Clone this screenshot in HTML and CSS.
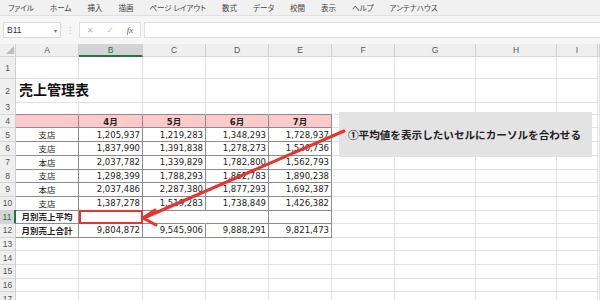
FILE: index.html
```html
<!DOCTYPE html>
<html lang="ja">
<head>
    <meta charset="UTF-8">
    <title>売上管理表</title>
    <link rel="stylesheet" href="styles.css">
</head>
<body>
    <div class="menubar">
        <span>ファイル</span><span>ホーム</span><span>挿入</span><span>描画</span><span>ページ レイアウト</span><span>数式</span><span>データ</span><span>校閲</span><span>表示</span><span>ヘルプ</span><span>アンテナハウス</span>
    </div>
    <div class="formulabar">
        <div class="namebox"><span>B11</span><span class="drop">▾</span></div>
        <div class="grip">⋮</div>
        <div class="fxbox"><span>✕</span><span>✓</span><span class="fx">fx</span></div>
        <div class="input"></div>
    </div>
    <div class="sheet">
        <div class="row head"><div class="corner"><span class="tri"></span></div><div>A</div><div class="sel">B</div><div>C</div><div>D</div><div>E</div><div>F</div><div>G</div><div>H</div><div>I</div><div></div></div>
        <div class="row r1"><div class="rh">1</div><div></div><div></div><div></div><div></div><div></div><div></div><div></div><div></div><div></div><div></div></div>
        <div class="row r2"><div class="rh">2</div><div class="title">売上管理表</div><div></div><div></div><div></div><div></div><div></div><div></div><div></div><div></div><div></div></div>
        <div class="row"><div class="rh">3</div><div class="tt"></div><div class="tt"></div><div class="tt"></div><div class="tt"></div><div class="tt"></div><div></div><div></div><div></div><div></div><div></div></div>
        <div class="row"><div class="rh">4</div><div class="t h"></div><div class="t h">4月</div><div class="t h">5月</div><div class="t h">6月</div><div class="t h">7月</div><div></div><div></div><div></div><div></div><div></div></div>
        <div class="row"><div class="rh">5</div><div class="t c">支店</div><div class="t n">1,205,937</div><div class="t n">1,219,283</div><div class="t n">1,348,293</div><div class="t n">1,728,937</div><div></div><div></div><div></div><div></div><div></div></div>
        <div class="row"><div class="rh">6</div><div class="t c">支店</div><div class="t n">1,837,990</div><div class="t n">1,391,838</div><div class="t n">1,278,273</div><div class="t n">1,520,736</div><div></div><div></div><div></div><div></div><div></div></div>
        <div class="row"><div class="rh">7</div><div class="t c">本店</div><div class="t n">2,037,782</div><div class="t n">1,339,829</div><div class="t n">1,782,800</div><div class="t n">1,562,793</div><div></div><div></div><div></div><div></div><div></div></div>
        <div class="row"><div class="rh">8</div><div class="t c">支店</div><div class="t n">1,298,399</div><div class="t n">1,788,293</div><div class="t n">1,862,783</div><div class="t n">1,890,238</div><div></div><div></div><div></div><div></div><div></div></div>
        <div class="row"><div class="rh">9</div><div class="t c">本店</div><div class="t n">2,037,486</div><div class="t n">2,287,380</div><div class="t n">1,877,293</div><div class="t n">1,692,387</div><div></div><div></div><div></div><div></div><div></div></div>
        <div class="row"><div class="rh">10</div><div class="t c">支店</div><div class="t n">1,387,278</div><div class="t n">1,519,283</div><div class="t n">1,738,849</div><div class="t n">1,426,382</div><div></div><div></div><div></div><div></div><div></div></div>
        <div class="row"><div class="rh cur">11</div><div class="t c b">月別売上平均</div><div class="t active"></div><div class="t open"></div><div class="t"></div><div class="t"></div><div></div><div></div><div></div><div></div><div></div></div>
        <div class="row"><div class="rh">12</div><div class="t c b">月別売上合計</div><div class="t n">9,804,872</div><div class="t n">9,545,906</div><div class="t n">9,888,291</div><div class="t n">9,821,473</div><div></div><div></div><div></div><div></div><div></div></div>
        <div class="row"><div class="rh">13</div><div></div><div></div><div></div><div></div><div></div><div></div><div></div><div></div><div></div><div></div></div>
        <div class="row"><div class="rh">14</div><div></div><div></div><div></div><div></div><div></div><div></div><div></div><div></div><div></div><div></div></div>
        <div class="row"><div class="rh">15</div><div></div><div></div><div></div><div></div><div></div><div></div><div></div><div></div><div></div><div></div></div>
        <div class="row"><div class="rh">16</div><div></div><div></div><div></div><div></div><div></div><div></div><div></div><div></div><div></div><div></div></div>
        <div class="row"><div class="rh">17</div><div></div><div></div><div></div><div></div><div></div><div></div><div></div><div></div><div></div><div></div></div>

        <!-- annotation -->
        <div class="callout">①平均値を表示したいセルにカーソルを合わせる</div>
        <svg class="arrow" width="600" height="256" viewBox="0 0 600 256">
            <line x1="344" y1="87" x2="145" y2="173.5" stroke="#e8332f" stroke-width="3" stroke-linecap="round"/>
            <polyline points="155,166 143,174 156,181" fill="none" stroke="#e8332f" stroke-width="3" stroke-linecap="round" stroke-linejoin="round"/>
        </svg>
    </div>
</body>
</html>
```

FILE: styles.css
```css
body {
    margin: 0;
    width: 600px;
    height: 300px;
    overflow: hidden;
    background: #fff;
    font-family: "DejaVu Sans", "Noto Sans CJK JP", sans-serif;
}

/* ribbon tabs */
.menubar {
    height: 15px;
    display: flex;
    align-items: center;
    gap: 16px;
    padding-left: 8px;
    background: #f1f1f1;
    border-bottom: 1px solid #e0e0e0;
    font-family: "Noto Sans CJK JP", sans-serif;
    font-size: 7.5px;
    color: #444;
    font-feature-settings: "palt";
}

/* name box + formula input */
.formulabar {
    height: 28px;
    display: flex;
    align-items: center;
    padding-left: 3px;
    box-sizing: border-box;
    background: #f6f6f6;
}

.namebox {
    width: 58px;
    height: 16px;
    display: flex;
    align-items: center;
    justify-content: space-between;
    padding: 0 3px;
    box-sizing: border-box;
    background: #fff;
    border: 1px solid #dadada;
    font-family: "Liberation Sans", sans-serif;
    font-size: 8.5px;
    color: #333;
}

.namebox .drop {
    font-size: 6px;
    color: #777;
}

.grip {
    width: 18px;
    text-align: center;
    font-size: 8px;
    color: #bbb;
}

.fxbox {
    width: 62px;
    height: 16px;
    display: flex;
    align-items: center;
    justify-content: space-around;
    box-sizing: border-box;
    background: #fff;
    border: 1px solid #e0e0e0;
    font-size: 8px;
    color: #b5b5b5;
}

.fxbox .fx {
    font-family: "Liberation Serif", serif;
    font-style: italic;
    font-size: 9px;
    color: #555;
}

.input {
    flex: 1;
    height: 16px;
    margin-left: 3px;
    box-sizing: border-box;
    background: #fff;
    border: 1px solid #e0e0e0;
    border-right: none;
}

/* sheet grid */
.sheet {
    position: relative;
}

.row {
    display: grid;
    grid-template-columns: 16px 63px 64px 63px 63px 63px 63px 81px 81px 41px 1fr;
    height: 13.67px;
}

.row > div {
    display: flex;
    align-items: center;
    min-width: 0;
    box-sizing: border-box;
    border-right: 1px solid #e2e2e2;
    border-bottom: 1px solid #e2e2e2;
    white-space: nowrap;
    font-size: 8.5px;
    color: #222;
}

.row.head {
    height: 13px;
}

.row.r1,
.row.r2 {
    height: 22px;
}

.row.head > div,
.row > .rh {
    justify-content: center;
    background: #efefef;
    border-right-color: #d0d0d0;
    border-bottom-color: #d6d6d6;
    font-family: "Liberation Sans", sans-serif;
    font-size: 8.5px;
    color: #555;
}

.row.head > .sel {
    background: #d4d4d4;
    border-bottom: 2px solid #217346;
    color: #217346;
}

.row > .rh.cur {
    background: #d4d4d4;
    border-right: 2px solid #217346;
    color: #217346;
}

.row.head > .corner {
    align-items: flex-end;
    justify-content: flex-end;
    padding: 0 1px 2px 0;
}

.tri {
    width: 0;
    height: 0;
    border-left: 8px solid transparent;
    border-bottom: 8px solid #bcbcbc;
}

.row > .title {
    align-items: flex-end;
    padding: 0 0 3px 3px;
    border-right-color: transparent;
    font-family: "Noto Sans CJK JP", sans-serif;
    font-size: 14px;
    font-weight: bold;
    color: #111;
}

/* the sales table */
.row > .tt {
    border-bottom-color: #8c8c8c;
}

.row > .t {
    border-right-color: #8c8c8c;
    border-bottom-color: #8c8c8c;
}

.row > .h {
    justify-content: center;
    background: #fccaca;
    font-weight: bold;
}

.row > .c {
    justify-content: center;
    padding-bottom: 1px;
}

.row > .n {
    justify-content: flex-end;
    padding-right: 2px;
}

.row > .b {
    font-weight: bold;
}

.row > .open {
    border-right-color: transparent;
}

.row > .active {
    outline: 2px solid #e8332f;
    outline-offset: -2px;
}

/* annotation */
.callout {
    position: absolute;
    left: 339px;
    top: 68px;
    width: 253px;
    height: 45px;
    display: flex;
    align-items: center;
    padding-left: 9px;
    box-sizing: border-box;
    background: #e3e3e3;
    font-family: "Noto Sans CJK JP", sans-serif;
    font-size: 10.6px;
    font-weight: bold;
    color: #222;
    white-space: nowrap;
}

.arrow {
    position: absolute;
    left: 0;
    top: 0;
}
```
